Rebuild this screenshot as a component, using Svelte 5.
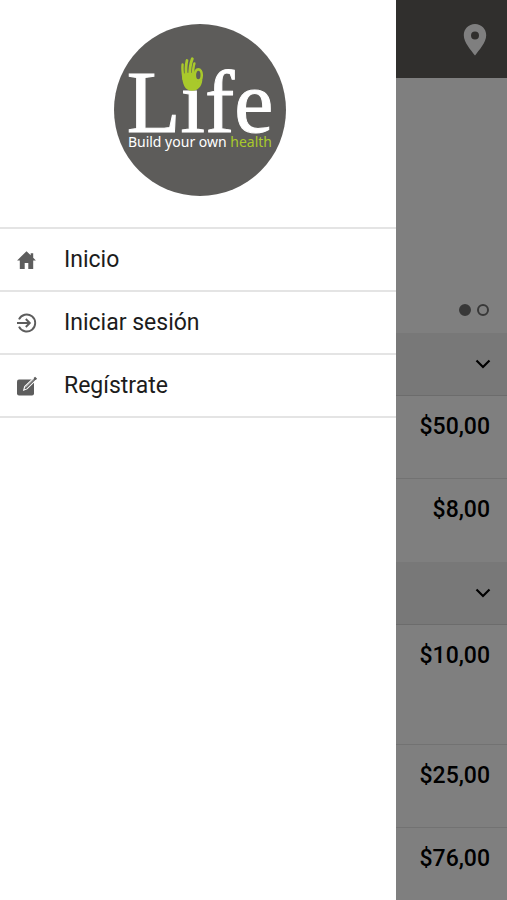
<script>
  const sections = [
    { id: 'first', prices: [{ text: '$50,00' }, { text: '$8,00' }] },
    { id: 'second', prices: [{ text: '$10,00', tall: true }, { text: '$25,00' }, { text: '$76,00' }] }
  ];
  const menu = [
    { icon: 'home', label: 'Inicio' },
    { icon: 'login', label: 'Iniciar sesión' },
    { icon: 'edit', label: 'Regístrate' }
  ];
</script>

<div class="app">
  <main>
    <header>
      <button class="pin" aria-label="Ubicación">
        <svg width="24" height="34" viewBox="0 0 24 34">
          <path fill="#fff" fill-rule="evenodd" d="M12 1C5.600 1 .8 6 .8 12.200c0 7.300 7.200 14.800 11.200 20.300 4-5.500 11.200-13 11.200-20.300C23.200 6 18.400 1 12 1zm0 7.600a4 4 0 1 1 0 8 4 4 0 0 1 0-8z" />
        </svg>
      </button>
    </header>
    <div class="carousel">
      <span class="dot active"></span>
      <span class="dot"></span>
    </div>
    {#each sections as section (section.id)}
      <section>
        <button class="toggle" aria-label="Mostrar u ocultar">
          <svg width="16" height="10" viewBox="0 0 16 10">
            <path d="M1.500 1.500 8 8l6.500-6.500" fill="none" stroke="#000" stroke-width="2.200" />
          </svg>
        </button>
        <ul>
          {#each section.prices as price}
            <li class:tall={price.tall}>{price.text}</li>
          {/each}
        </ul>
      </section>
    {/each}
  </main>
  <div class="scrim"></div>

  <aside>
    <div class="brand">
      <div class="logo">
        <svg class="hand" width="24" height="36" viewBox="0 0 24 36">
          <g fill="none" stroke="#a9c92b" stroke-linecap="round">
            <path d="M2.600 8.500C2 13 2.600 17 3.500 23" stroke-width="2.400" />
            <path d="M7 4.500C5.600 10 5.600 15 6.500 22" stroke-width="2.800" />
            <path d="M12.300 2.800C10.200 8 9.600 13 9.800 20" stroke-width="2.900" />
            <path d="M14.400 7.500C13.200 11 13 15 12.800 20" stroke-width="2.400" />
            <ellipse cx="18.300" cy="19" rx="3.500" ry="5.600" stroke-width="2.600" />
          </g>
          <path fill="#a9c92b" d="M2.200 18.500C4 16.500 12 16 14.300 18c-.2 4 1 6.800 3.500 7.200 2 .2 3.600-1 4.500-3.200.6 6-3 12.800-10.300 12.800C5 34.800 2 28 2.200 18.500z" />
        </svg>
        <div class="name">Lıfe</div>
        <div class="tagline">Build your own <span>health</span></div>
      </div>
    </div>
    <nav>
      {#each menu as item}
        <a href="#{item.icon}">
          <svg width="22" height="22" viewBox="0 0 22 22">
            {#if item.icon === 'home'}
              <path fill="#5d5d5d" d="M10.500 2.200 1.100 11.400h2.700V20h4.900v-6h3.600v6h4.900v-8.600h2.700L17.200 8.700V4.300h-2.500v2z" />
            {:else if item.icon === 'login'}
              <g fill="none" stroke="#5d5d5d" stroke-width="1.900">
                <path d="M3 7.400a8.500 8.500 0 1 1 0 7.200" />
                <path d="M1 11h12.500M9.800 7l4 4-4 4" />
              </g>
            {:else}
              <rect x="1" y="4.500" width="17" height="16" rx="2" fill="#5d5d5d" />
              <path d="m7.700 15.200 1-3.700L18.800 1.900l2.200 2.200-10 9.800z" fill="#5d5d5d" stroke="#fff" stroke-width="1.100" />
              <path d="m9.500 12.500 8.600-8.200" stroke="#ddd" stroke-width=".6" />
              <path d="m17.700 2.900 1.400-1.200 2 2-1.400 1.300z" fill="#5d5d5d" />
            {/if}
          </svg>
          {item.label}
        </a>
      {/each}
    </nav>
  </aside>
</div>

<style>
  :global(body) {
    background: #fff;
  }
  .app {
    position: relative;
    height: 100vh;
    overflow: hidden;
    font-family: Roboto, 'Liberation Sans', sans-serif;
    color: #000;
  }
  button {
    border: 0;
    padding: 0;
    background: none;
    display: flex;
    align-items: center;
    justify-content: flex-end;
  }
  header {
    height: 78px;
    background: #605f5b;
    display: flex;
    align-items: center;
    justify-content: flex-end;
    padding: 2px 20px 0 0;
    box-sizing: border-box;
  }
  .carousel {
    height: 255px;
    box-sizing: border-box;
    padding: 0 18px 17px 0;
    display: flex;
    align-items: flex-end;
    justify-content: flex-end;
    gap: 6px;
  }
  .dot {
    box-sizing: border-box;
    width: 12px;
    height: 12px;
    border: 2px solid #707070;
    border-radius: 50%;
  }
  .active {
    background: #707070;
  }
  .toggle {
    width: 100%;
    height: 63px;
    padding-right: 16px;
    background: #f1f1f1;
    border-bottom: 1px solid #d8d8d8;
  }
  ul {
    list-style: none;
    margin: 0;
    padding: 0;
  }
  li {
    box-sizing: border-box;
    height: 83px;
    padding: 18px 17px 0 0;
    border-bottom: 1px solid #e4e4e4;
    text-align: right;
    font-size: 23px;
    line-height: 26px;
    font-weight: 500;
  }
  li.tall {
    height: 120px;
  }
  section:first-of-type li:last-child {
    border-bottom: 0;
  }
  .scrim {
    position: absolute;
    inset: 0;
    background: rgba(0, 0, 0, 0.5);
  }
  aside {
    position: absolute;
    top: 0;
    bottom: 0;
    left: 0;
    width: 78.1%;
    background: #fff;
  }
  .brand {
    display: flex;
    justify-content: center;
    padding: 24px 0 31px 4px;
  }
  .logo {
    position: relative;
    box-sizing: border-box;
    width: 172px;
    height: 172px;
    padding-top: 48px;
    border-radius: 50%;
    background: #5d5c5a;
    color: #fff;
    text-align: center;
    white-space: nowrap;
  }
  .hand {
    position: absolute;
    left: 66px;
    top: 32px;
  }
  .name {
    font-family: 'Liberation Serif', serif;
    font-size: 88px;
    line-height: 62px;
    -webkit-text-stroke: 1px #fff;
  }
  .tagline {
    font-family: 'Noto Sans', sans-serif;
    font-size: 14px;
    line-height: 16px;
  }
  .tagline span {
    color: #a9c92b;
  }
  nav {
    border-top: 2px solid #e4e4e4;
  }
  nav a {
    display: flex;
    align-items: center;
    gap: 26px;
    height: 61px;
    padding-left: 16px;
    border-bottom: 2px solid #e4e4e4;
    color: #1c1c1c;
    font-size: 23px;
    line-height: 26px;
    text-decoration: none;
  }
  nav a svg {
    flex: none;
  }
</style>
